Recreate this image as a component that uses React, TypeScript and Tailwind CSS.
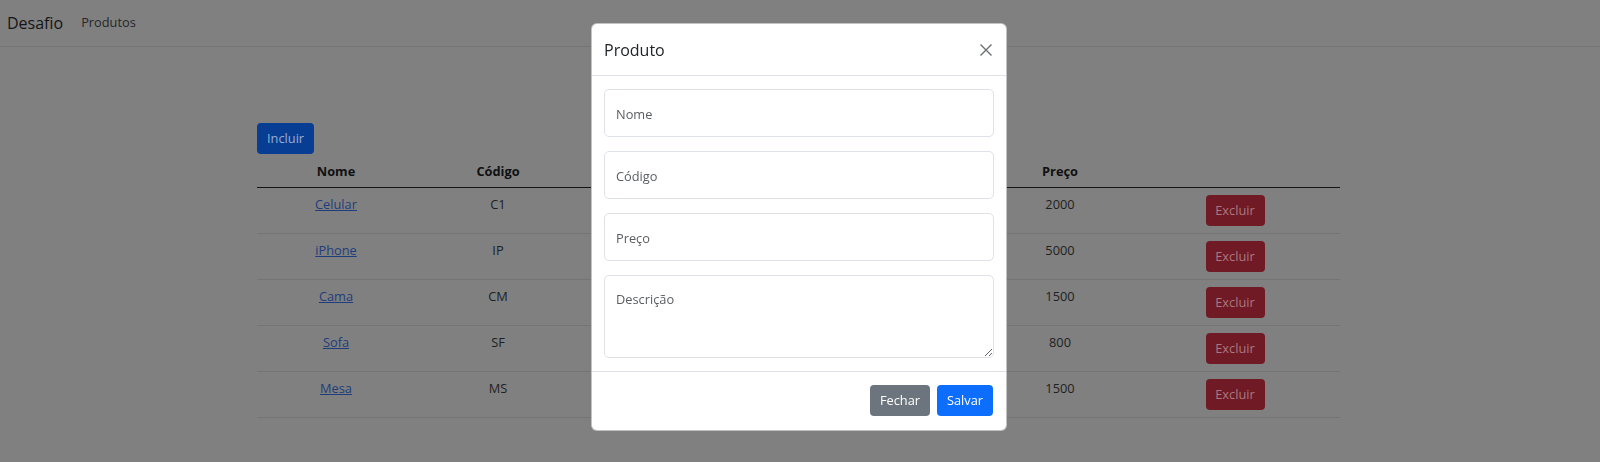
import React from 'react';

const produtos = [
  { nome: 'Celular', codigo: 'C1', descricao: '', preco: '2000' },
  { nome: 'iPhone', codigo: 'IP', descricao: '', preco: '5000' },
  { nome: 'Cama', codigo: 'CM', descricao: '', preco: '1500' },
  { nome: 'Sofa', codigo: 'SF', descricao: '', preco: '800' },
  { nome: 'Mesa', codigo: 'MS', descricao: '', preco: '1500' },
];

const cols = 'grid grid-cols-[158px_166px_409px_140px_210px]';

function CloseIcon() {
  return (
    <svg width="12" height="12" viewBox="0 0 12 12" fill="none">
      <path d="M0.5 0.5L11.5 11.5M11.5 0.5L0.5 11.5" stroke="#6b6e72" strokeWidth="1.4" />
    </svg>
  );
}

export default function App() {
  return (
    <div className="min-h-screen bg-[#808080] font-['Open_Sans',sans-serif] text-[12.8px] leading-[19.2px] text-[#1e1f20]">
      {/* navbar */}
      <nav className="h-[47px] border-b border-[#757575] flex items-center px-[7px]">
        <span className="text-[16px] leading-[24px] text-[#141516]">Desafio</span>
        <span className="ml-[18px] text-[#262729]">Produtos</span>
      </nav>

      {/* tabela */}
      <div className="ml-[257px] w-[1083px] pt-[76px]">
        <button className="h-[31px] px-[10px] rounded-[4px] bg-[#073d92] text-[#98aed4]">Incluir</button>
        <div className={`${cols} h-[34px] pt-[8px] border-b border-[#141414] font-bold text-[#0f1011] text-center`}>
          <div>Nome</div>
          <div>Código</div>
          <div>Descrição</div>
          <div>Preço</div>
          <div></div>
        </div>
        {produtos.map((p) => (
          <div key={p.nome} className={`${cols} h-[46px] pt-[7px] border-b border-[#737475] text-center items-start`}>
            <div>
              <a href="#" className="underline text-[#1f3d7c]">{p.nome}</a>
            </div>
            <div>{p.codigo}</div>
            <div>{p.descricao}</div>
            <div>{p.preco}</div>
            <div className="flex justify-center">
              <button className="h-[31px] w-[59px] rounded-[4px] bg-[#701a25] text-[#ab7880]">Excluir</button>
            </div>
          </div>
        ))}
      </div>

      {/* modal */}
      <div className="fixed inset-0 flex justify-start pl-[591px] pt-[23px]">
        <div className="w-[416px] h-[408px] bg-white rounded-[6px] border border-[#6a6a6a]/40 flex flex-col text-[#212529]">
          <div className="h-[52px] flex items-center justify-between pl-[12px] pr-[13px] border-b border-[#dee2e6]">
            <h5 className="text-[16px] leading-[24px] font-medium">Produto</h5>
            <button className="w-[14px] h-[14px] flex items-center justify-center">
              <CloseIcon />
            </button>
          </div>
          <div className="px-[12px] pt-[13px] flex flex-col gap-[14px]">
            {['Nome', 'Código', 'Preço'].map((label) => (
              <input
                key={label}
                placeholder={label}
                className="h-[48px] w-full rounded-[5px] border border-[#dee2e6] px-[11px] pt-[2px] text-[12.8px] placeholder:text-[#5a5e62] outline-none"
              />
            ))}
            <textarea
              placeholder="Descrição"
              className="h-[83px] w-full rounded-[5px] border border-[#dee2e6] px-[11px] pt-[14px] text-[12.8px] leading-[19.2px] placeholder:text-[#5a5e62] outline-none"
            />
          </div>
          <div className="mt-[13px] border-t border-[#dee2e6] flex justify-end gap-[7px] pt-[13px] pr-[13px]">
            <button className="h-[31px] w-[60px] rounded-[4px] bg-[#6c757d] text-white">Fechar</button>
            <button className="h-[31px] w-[56px] rounded-[4px] bg-[#0d6efd] text-white">Salvar</button>
          </div>
        </div>
      </div>
    </div>
  );
}
